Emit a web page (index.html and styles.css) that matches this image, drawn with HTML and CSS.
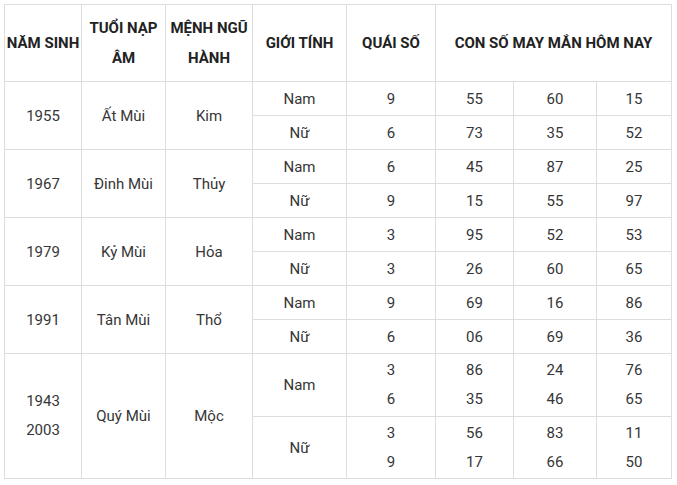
FILE: index.html
```html
<!DOCTYPE html>
<html lang="vi">
<head>
<meta charset="utf-8">
<link rel="stylesheet" href="styles.css">
</head>
<body>
<div class="wrap">
<table class="lucky">
<colgroup>
<col class="c1"><col class="c2"><col class="c3"><col class="c4"><col class="c5"><col class="c6"><col class="c7"><col class="c8">
</colgroup>
<thead>
<tr class="head">
<th>NĂM SINH</th>
<th>TUỔI NẠP<br>ÂM</th>
<th>MỆNH NGŨ<br>HÀNH</th>
<th>GIỚI TÍNH</th>
<th>QUÁI SỐ</th>
<th colspan="3">CON SỐ MAY MẮN HÔM NAY</th>
</tr>
</thead>
<tbody>
<tr class="r"><td rowspan="2">1955</td><td rowspan="2">Ất Mùi</td><td rowspan="2">Kim</td><td>Nam</td><td>9</td><td>55</td><td>60</td><td>15</td></tr>
<tr class="r"><td>Nữ</td><td>6</td><td>73</td><td>35</td><td>52</td></tr>
<tr class="r"><td rowspan="2">1967</td><td rowspan="2">Đinh Mùi</td><td rowspan="2">Thủy</td><td>Nam</td><td>6</td><td>45</td><td>87</td><td>25</td></tr>
<tr class="r"><td>Nữ</td><td>9</td><td>15</td><td>55</td><td>97</td></tr>
<tr class="r"><td rowspan="2">1979</td><td rowspan="2">Kỷ Mùi</td><td rowspan="2">Hỏa</td><td>Nam</td><td>3</td><td>95</td><td>52</td><td>53</td></tr>
<tr class="r"><td>Nữ</td><td>3</td><td>26</td><td>60</td><td>65</td></tr>
<tr class="r"><td rowspan="2">1991</td><td rowspan="2">Tân Mùi</td><td rowspan="2">Thổ</td><td>Nam</td><td>9</td><td>69</td><td>16</td><td>86</td></tr>
<tr class="r"><td>Nữ</td><td>6</td><td>06</td><td>69</td><td>36</td></tr>
<tr class="rt1"><td rowspan="2" class="multi">1943<br>2003</td><td rowspan="2">Quý Mùi</td><td rowspan="2">Mộc</td><td>Nam</td><td class="multi">3<br>6</td><td class="multi">86<br>35</td><td class="multi">24<br>46</td><td class="multi">76<br>65</td></tr>
<tr class="rt2"><td>Nữ</td><td class="multi">3<br>9</td><td class="multi">56<br>17</td><td class="multi">83<br>66</td><td class="multi">11<br>50</td></tr>
</tbody>
</table>
</div>
</body>
</html>
```

FILE: styles.css
```css
html, body {
  margin: 0;
  padding: 0;
  background: #ffffff;
}
.wrap {
  padding: 4px 0 0 4px;
}
.lucky {
  border-collapse: collapse;
  table-layout: fixed;
  width: 668px;
  font-family: Roboto, "Liberation Sans", Arial, sans-serif;
  font-size: 15px;
  color: #363636;
}
.c1 { width: 77px; }
.c2 { width: 84px; }
.c3 { width: 87px; }
.c4 { width: 94px; }
.c5 { width: 89px; }
.c6 { width: 78px; }
.c7 { width: 83px; }
.c8 { width: 75px; }
.lucky th,
.lucky td {
  border: 1px solid #dddddd;
  padding: 0;
  text-align: center;
  vertical-align: middle;
}
.lucky th {
  font-weight: 700;
  color: #222222;
  line-height: 30px;
}
.head { height: 77px; }
.r { height: 34px; }
.rt1 { height: 63px; }
.rt2 { height: 62px; }
.lucky td {
  line-height: 20px;
}
.lucky td.multi {
  line-height: 29px;
}
```
